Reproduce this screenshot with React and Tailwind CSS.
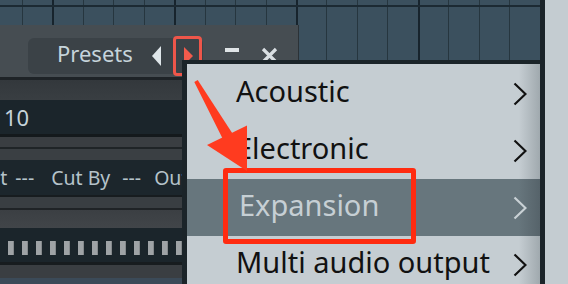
import React from "react";

const cols = Array.from({ length: 17 }, (_, k) => k);
const steps = Array.from({ length: 13 }, (_, k) => k);

function GridCols() {
  return (
    <div className="flex h-full">
      <div className="w-[22px] shrink-0" />
      {cols.map((k) => (
        <div
          key={k}
          className={
            k % 4 === 1
              ? "w-[30.45px] shrink-0 h-full border-l-2 border-[#17242d]"
              : "w-[30.45px] shrink-0 h-full border-l-[1.5px] border-[#26363f]"
          }
        />
      ))}
    </div>
  );
}

function Chevron({ color }) {
  return (
    <svg width="14" height="24" viewBox="0 0 14 24" className="shrink-0">
      <path d="M1.5 1.5 L12.5 12 L1.5 22.5" fill="none" stroke={color} strokeWidth="2.2" />
    </svg>
  );
}

const items = [
  { label: "Acoustic", active: false },
  { label: "Electronic", active: false },
  { label: "Expansion", active: true },
  { label: "Multi audio output", active: false },
];

export default function App() {
  return (
    <div className="relative w-[568px] h-[284px] overflow-hidden flex font-['Noto_Sans',sans-serif] bg-[#3b505e]">
      {/* left desktop area with grid */}
      <div className="relative w-[540px] h-full flex flex-col bg-[#3b505e] shrink-0">
        <div className="h-[5px]">
          <GridCols />
        </div>
        <div className="h-[2px] bg-[#1c2a33]" />
        <div className="flex-1">
          <GridCols />
        </div>

        {/* plugin window */}
        <div className="absolute left-0 top-[25px] w-[299px] h-[259px] flex flex-col bg-[#1b252b] border-r border-[#2b3237]">
          <div className="h-[52px] bg-[#464d52] flex items-start shrink-0">
            <div className="mt-[13px] ml-[28px] h-[36px] w-[175px] shrink-0 rounded-[6px] bg-[#3b4247] flex items-center pl-[29px]">
              <span className="text-[22px] leading-none text-[#c6d4db] mb-[7px]">Presets</span>
              <svg className="ml-[19px] shrink-0" width="9" height="20" viewBox="0 0 9 20">
                <polygon points="9,0 0,10 9,20" fill="#dfe6ea" />
              </svg>
              <div className="ml-[12px] w-[29px] h-[40px] shrink-0 border-[3px] border-[#ee564a] rounded-[4px] flex items-center pl-[8px]">
                <svg width="9" height="18" viewBox="0 0 9 18" className="shrink-0">
                  <polygon points="0,0 9,9 0,18" fill="#f25b4c" />
                </svg>
              </div>
            </div>
            <div className="mt-[23px] ml-[22px] w-[14px] h-[3.5px] bg-[#dfe4e7] shrink-0" />
            <svg className="mt-[22px] ml-[22px] shrink-0" width="17" height="17" viewBox="0 0 17 17">
              <path d="M2 2L15 15M15 2L2 15" stroke="#d9dfe3" strokeWidth="3.2" />
            </svg>
          </div>
          <div className="h-[3px] bg-[#1e2327] shrink-0" />
          <div className="h-[20px] bg-[linear-gradient(180deg,#33383c,#393e42)] shrink-0" />
          <div className="h-[34px] bg-[#1b252b] flex items-center pl-[4px] shrink-0">
            <span className="text-[22px] leading-none text-[#c5d3da]">10</span>
          </div>
          <div className="h-[3px] bg-[#14191c] shrink-0" />
          <div className="h-[10px] bg-[#3a3e42] shrink-0" />
          <div className="h-[2px] bg-[#1f2427] shrink-0" />
          <div className="h-[11px] bg-[#3a3f43] shrink-0" />
          <div className="h-[35px] bg-[#1c262c] flex items-center text-[19.5px] leading-none text-[#b5c3ca] whitespace-nowrap overflow-hidden shrink-0">
            <span className="ml-[-27px]">Out</span>
            <span className="ml-[8px]">---</span>
            <span className="ml-[17px]">Cut By</span>
            <span className="ml-[12px]">---</span>
            <span className="ml-[13px]">Output</span>
          </div>
          <div className="h-[2px] bg-[#171c1f] shrink-0" />
          <div className="h-[11px] bg-[#393e42] shrink-0" />
          <div className="h-[2px] bg-[#1f2326] shrink-0" />
          <div className="h-[18px] bg-[linear-gradient(180deg,#3b3f43,#414549)] shrink-0" />
          <div className="h-[34px] bg-[#1b252b] flex items-start pt-[13px] pl-[8px] gap-[8px] shrink-0">
            {steps.map((s) => (
              <div key={s} className="w-[6px] h-[14px] bg-[#9fa3a6] border-r border-[#85898c] shrink-0" />
            ))}
          </div>
          <div className="h-[3px] bg-[#171c1f] shrink-0" />
          <div className="h-[13px] bg-[#3a3e42] shrink-0" />
          <div className="h-[6px] bg-[#3b4a58] shrink-0" />
        </div>
      </div>

      <div className="w-[5px] h-full bg-[#1b2429] shrink-0" />
      <div className="flex-1 h-full bg-[#c4ccd1]" />

      {/* dropdown menu */}
      <div className="absolute left-[182px] top-[60px] w-[358px] h-[240px] border-l-[5px] border-t-[4px] border-[#1b2429] bg-[linear-gradient(90deg,#c5cdd2_0%,#c5cdd2_94%,#a0a9ae_100%)] flex flex-col pt-[1px]">
        {items.map((it) =>
          it.active ? (
            <div
              key={it.label}
              className="h-[57px] shrink-0 flex items-center justify-between pl-[52px] pr-[13px] bg-[linear-gradient(90deg,#67767d_0%,#67767d_94%,#56636a_100%)]"
            >
              <span className="text-[29px] leading-none text-[#c6cfd4] mb-[6px] whitespace-nowrap">{it.label}</span>
              <Chevron color="#c9d1d5" />
            </div>
          ) : (
            <div
              key={it.label}
              className="h-[57px] shrink-0 flex items-center justify-between pl-[49px] pr-[13px]"
            >
              <span className="text-[29px] leading-none text-[#111111] mb-[6px] whitespace-nowrap">{it.label}</span>
              <Chevron color="#111111" />
            </div>
          )
        )}
      </div>

      {/* annotation: red box around Expansion */}
      <div className="absolute left-[223px] top-[168px] w-[193px] h-[76px] border-[5px] border-[#ff2b10] rounded-[3px]" />

      {/* annotation arrow */}
      <svg className="absolute left-0 top-0 pointer-events-none" width="568" height="284" viewBox="0 0 568 284">
        <polygon points="197.7,80 232.3,133.3 222.7,138.7 194.3,82" fill="#ff3b1f" />
        <polygon points="207,145 247,125.5 247,171" fill="#ff3b1f" />
      </svg>
    </div>
  );
}
